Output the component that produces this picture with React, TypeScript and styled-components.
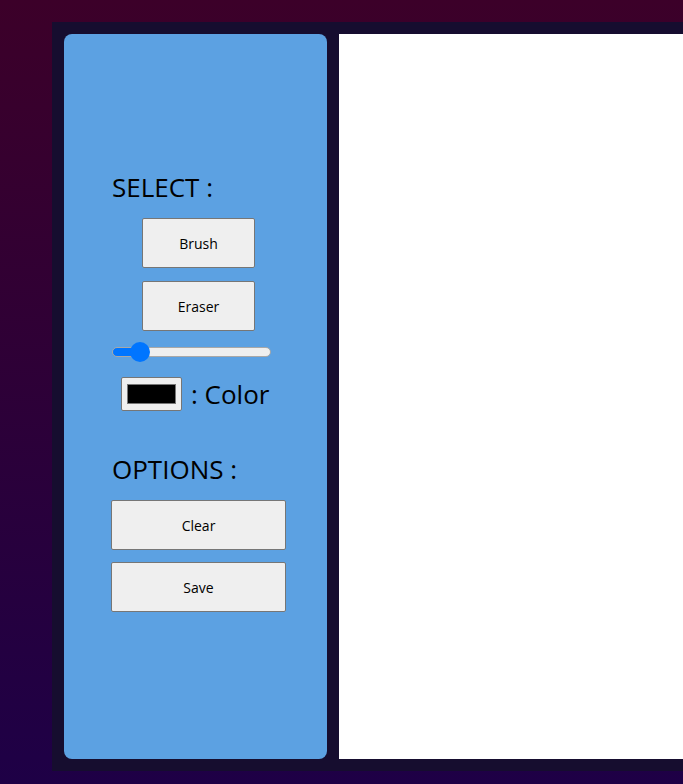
import React, { useState } from "react";
import styled, { createGlobalStyle } from "styled-components";

const Global = createGlobalStyle`
  html, body {
    margin: 0;
    padding: 0;
    height: 100%;
    overflow: hidden;
  }
  body {
    background: linear-gradient(to bottom, #3c0029 0%, #1e0046 100%);
    font-family: "Open Sans", "Noto Sans", sans-serif;
  }
`;

const Page = styled.div`
  height: 784px;
  box-sizing: border-box;
  padding: 22px 0 13px 52px;
  display: flex;
`;

const Frame = styled.div`
  display: flex;
  gap: 12px;
  padding: 12px 0 12px 12px;
  background: #160d2f;
  flex: 1;
  box-sizing: border-box;
`;

const Sidebar = styled.aside`
  width: 263px;
  flex: 0 0 263px;
  background: #5ca1e2;
  border-radius: 8px;
  box-sizing: border-box;
  padding: 137px 0 0 47px;
  display: flex;
  flex-direction: column;
  align-items: flex-start;
`;

const Canvas = styled.div`
  flex: 1;
  background: #ffffff;
`;

const Heading = styled.div<{ $mt?: number }>`
  font-size: 26px;
  line-height: 32px;
  height: 32px;
  color: #000;
  margin-top: ${(p) => p.$mt ?? 0}px;
  padding-left: 1px;
  white-space: nowrap;
`;

const Btn = styled.button<{ $wide?: boolean; $mt: number }>`
  width: ${(p) => (p.$wide ? 175 : 113)}px;
  height: 50px;
  margin-top: ${(p) => p.$mt}px;
  margin-left: ${(p) => (p.$wide ? 0 : 31)}px;
  background: #efefef;
  border: 1px solid #767676;
  border-radius: 2px;
  font-family: "Open Sans", "Noto Sans", sans-serif;
  font-size: 14px;
  color: #000;
  padding: 0;
`;

const SliderWrap = styled.div`
  height: 20px;
  margin: 11px 0 0 1px;
  display: flex;
  align-items: center;
`;

const Range = styled.input`
  -webkit-appearance: none;
  appearance: none;
  width: 159px;
  height: 10px;
  margin: 0;
  box-sizing: border-box;
  border: 1px solid #a8a8a8;
  border-radius: 5px;
  outline: none;
  &::-webkit-slider-thumb {
    -webkit-appearance: none;
    appearance: none;
    width: 20px;
    height: 20px;
    border-radius: 50%;
    background: #0075ff;
    border: none;
  }
`;

const ColorRow = styled.div`
  display: flex;
  align-items: center;
  gap: 9px;
  margin: 15px 0 0 10px;
  height: 34px;
`;

const ColorInput = styled.input`
  width: 61px;
  height: 34px;
  margin: 0;
  padding: 2px 3px;
  box-sizing: border-box;
  background: #efefef;
  border: 1px solid #767676;
  border-radius: 2px;
`;

const ColorLabel = styled.span`
  font-size: 26px;
  line-height: 34px;
  color: #000;
`;

const MIN = 1;
const MAX = 100;

export default function App() {
  const [size, setSize] = useState(13);
  const frac = (size - MIN) / (MAX - MIN);
  const fillPx = 11 + frac * 137;
  return (
    <>
      <Global />
      <Page>
        <Frame>
          <Sidebar>
            <Heading>SELECT :</Heading>
            <Btn $mt={15}>Brush</Btn>
            <Btn $mt={13}>Eraser</Btn>
            <SliderWrap>
              <Range
                type="range"
                min={MIN}
                max={MAX}
                value={size}
                onChange={(e) => setSize(Number(e.target.value))}
                style={{
                  background: `linear-gradient(to right, #0075ff 0 ${fillPx}px, #efefef ${fillPx}px 100%)`,
                }}
              />
            </SliderWrap>
            <ColorRow>
              <ColorInput type="color" defaultValue="#000000" />
              <ColorLabel>: Color</ColorLabel>
            </ColorRow>
            <Heading $mt={42}>OPTIONS :</Heading>
            <Btn $wide $mt={15}>Clear</Btn>
            <Btn $wide $mt={12}>Save</Btn>
          </Sidebar>
          <Canvas />
        </Frame>
      </Page>
    </>
  );
}
